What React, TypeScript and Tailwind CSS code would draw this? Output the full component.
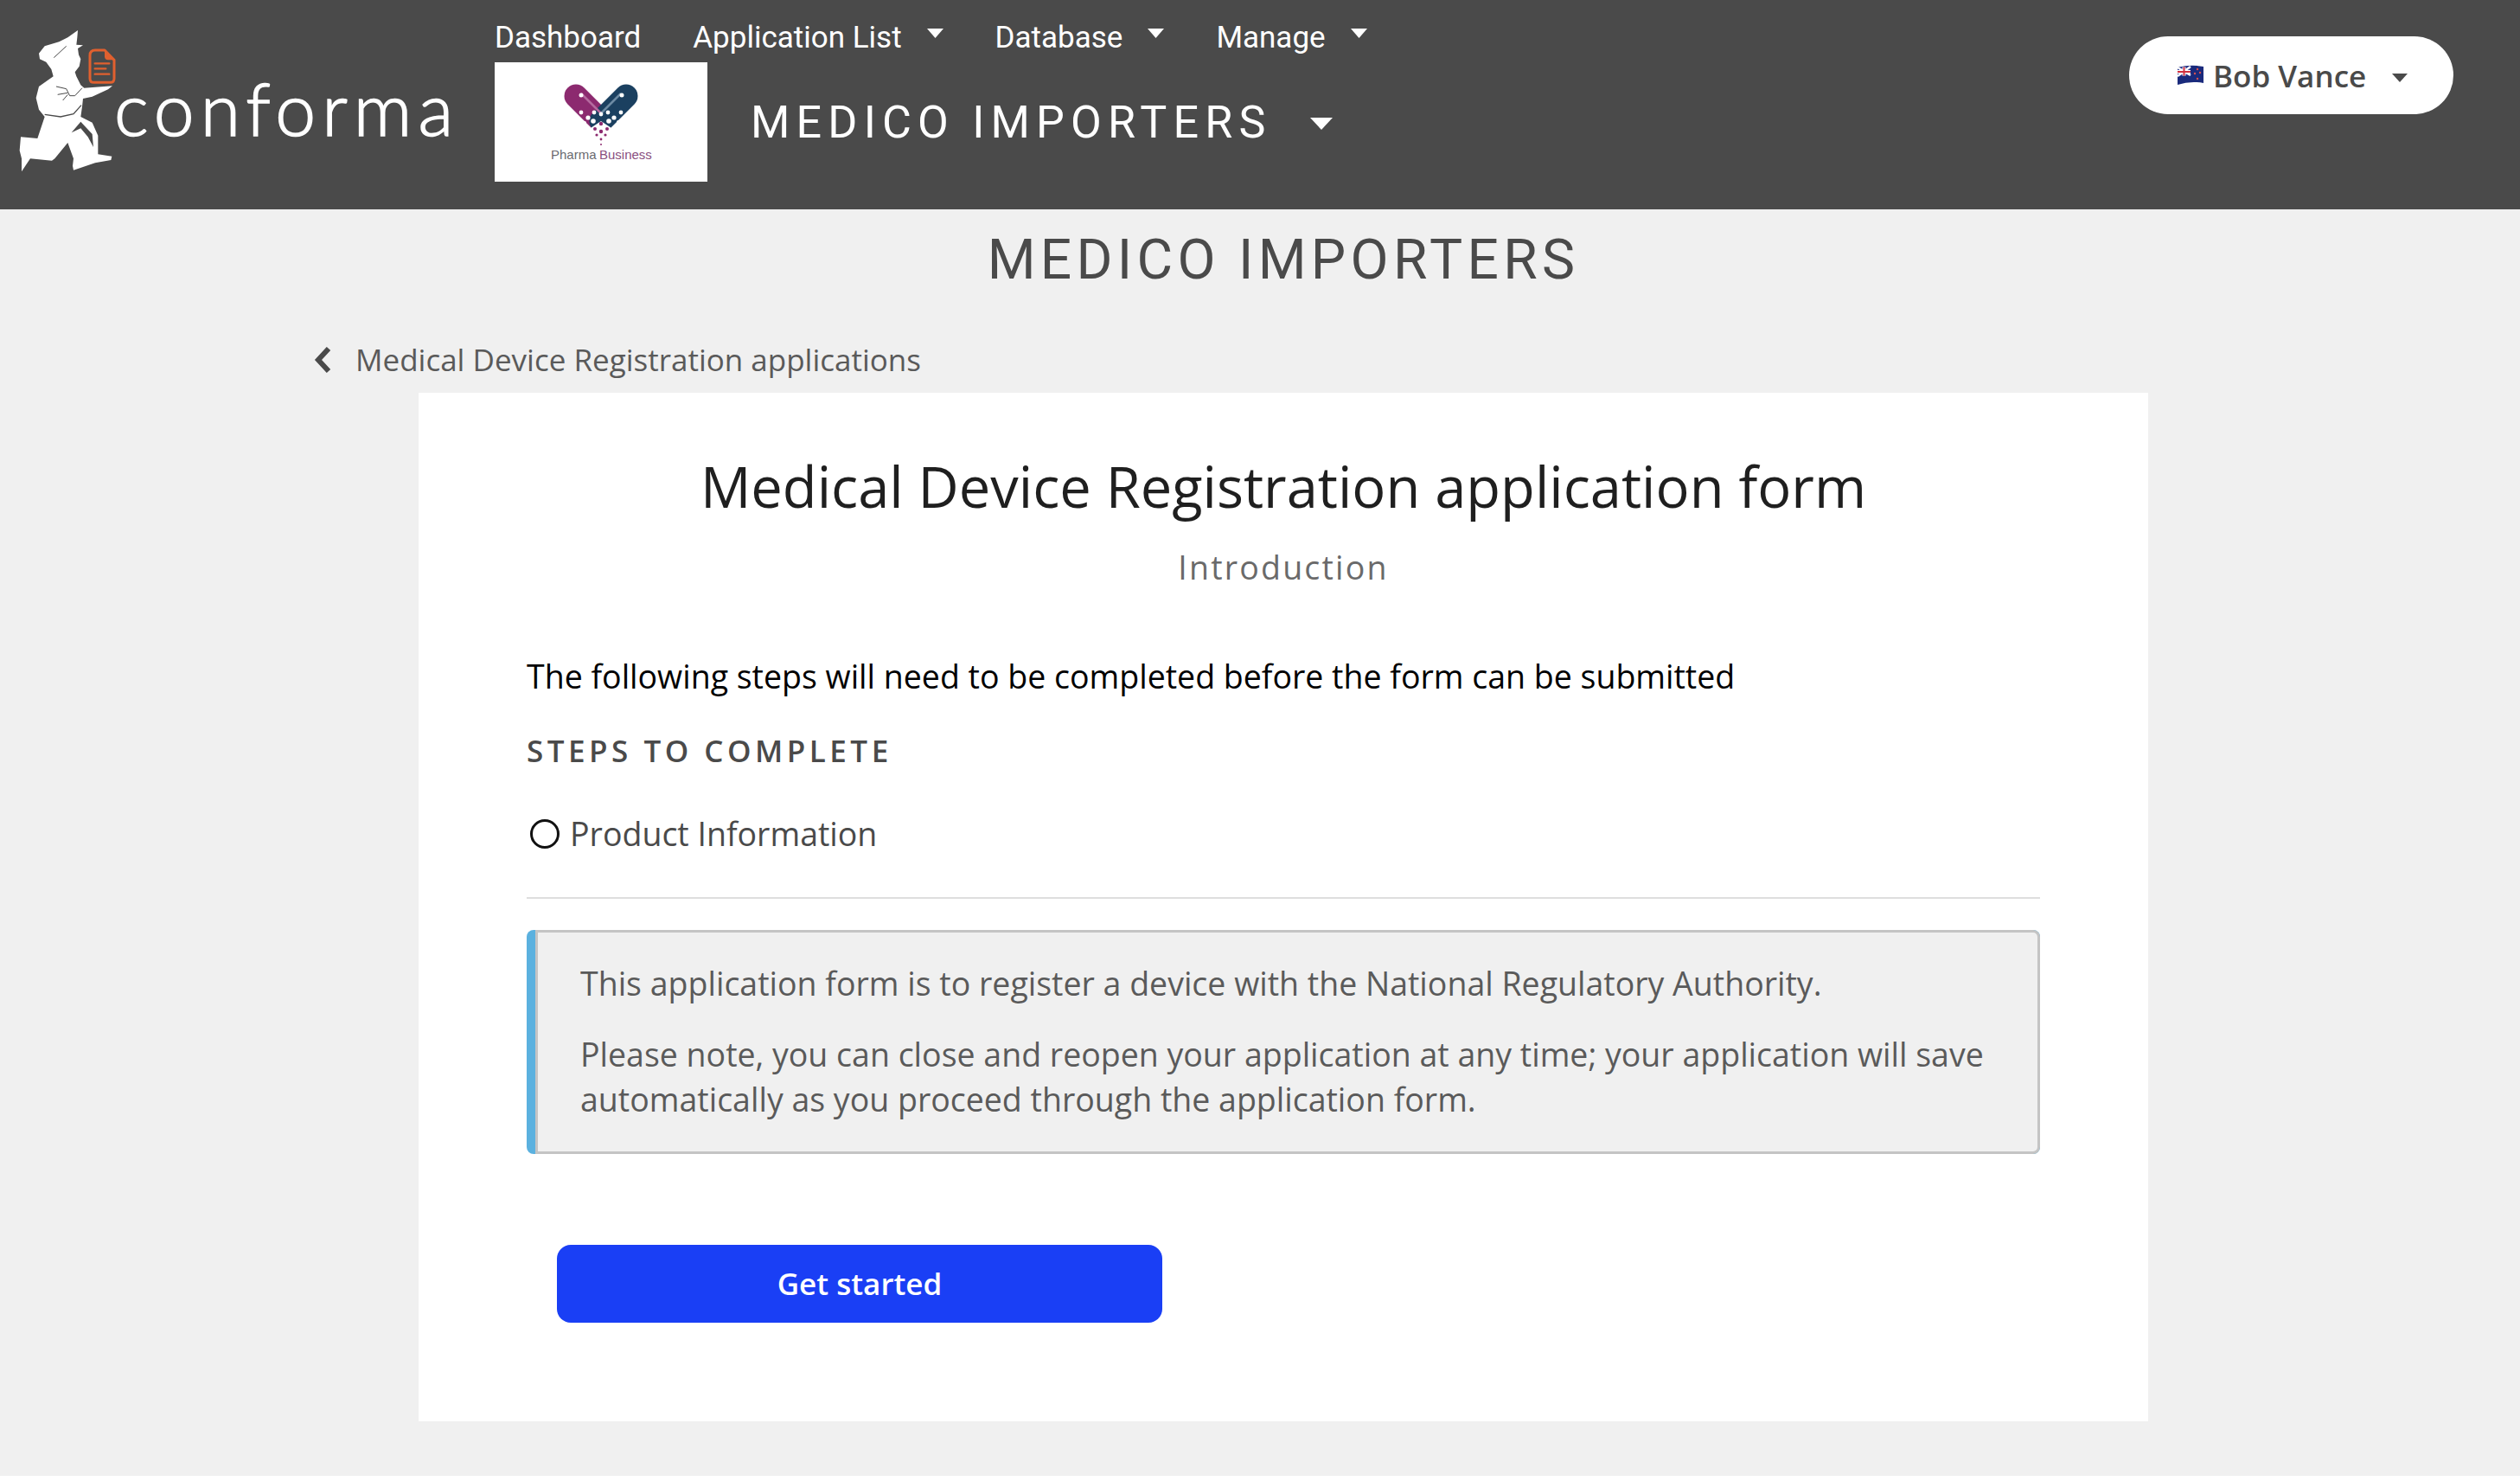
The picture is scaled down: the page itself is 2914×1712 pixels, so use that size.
import React from 'react';

// Running courier with the document, traced from the Conforma logo
function ConformaMan() {
  return (
    <svg width="130" height="190" viewBox="0 0 390 570" className="shrink-0">
      <path
        fill="#ffffff"
        d="M240 45 L238 70 L235 95 L258 97 L240 108 L243 130 L250 145 L245 170 L230 190 L235 205 L250 235 L262 245 L360 238 L345 250 L290 275 L258 282 L255 310 L250 345 L290 365 L310 410 L310 475 L358 482 L355 495 L300 505 L225 530 L222 515 L225 490 L205 435 L160 490 L150 497 L75 490 L55 520 L45 535 L45 490 L38 462 L42 415 L100 420 L125 345 L105 320 L95 280 L105 240 L140 215 L155 205 L148 180 L130 155 L108 145 L105 125 L125 100 L175 85 L205 70 Z"
      />
      <path fill="none" stroke="#4a4a4a" strokeWidth="3" d="M157 140 L200 100" />
      <path fill="none" stroke="#4a4a4a" strokeWidth="3" d="M165 240 L200 248 L212 272 L230 272 L255 245 M170 268 L205 262 M188 288 L205 268" />
      <path fill="none" stroke="#4a4a4a" strokeWidth="4" d="M125 337 L180 345 L225 335 L252 305" />
      <path fill="#4a4a4a" d="M218 400 L250 362 L290 405 L294 450 L275 415 L250 385 Z" />
      <path fill="none" stroke="#e0602f" strokeWidth="9" strokeLinejoin="round" d="M300 114 H333 L366 148 V212 Q366 226 352 226 H296 Q282 226 282 212 V132 Q282 114 300 114 Z" />
      <path fill="#e0602f" d="M333 114 L366 148 H345 Q333 148 333 136 Z" />
      <path stroke="#e0602f" strokeWidth="7" strokeLinecap="round" d="M299 160 H349 M299 178 H337 M299 197 H349" />
    </svg>
  );
}

// Client logo inside the white box
function PharmaLogo() {
  const whiteDots = [[100, 58, 2.4], [108, 64, 2.6], [115, 58, 2.4], [104, 70, 2], [131, 58, 2.4], [138, 64, 2.6], [146, 58, 2.4], [143, 69, 2], [123, 60, 2.4], [114, 68, 2.8], [132, 68, 2.8]];
  const purpleDots = [[123, 71, 2.2], [116, 77, 2], [130, 77, 2], [123, 80, 2.2], [118, 84, 1.6], [128, 84, 1.6], [123, 89, 1.4], [123, 95, 1]];
  return (
    <svg width="246" height="138" viewBox="0 0 246 138" className="block">
      <line x1="94" y1="39" x2="123" y2="68" stroke="#8c2a6f" strokeWidth="27" strokeLinecap="round" />
      <line x1="152" y1="39" x2="123" y2="68" stroke="#1b4060" strokeWidth="27" strokeLinecap="round" />
      <line x1="100" y1="36" x2="124" y2="60" stroke="#b56a9f" strokeWidth="2.5" />
      <line x1="146" y1="36" x2="122" y2="60" stroke="#6d8ba3" strokeWidth="2.5" />
      <circle cx="100" cy="38" r="2.5" fill="#ffffff" />
      <circle cx="147" cy="38" r="2.5" fill="#ffffff" />
      {whiteDots.map(([cx, cy, r], i) => (
        <circle key={i} cx={cx} cy={cy} r={r} fill="#ffffff" />
      ))}
      <path d="M108 78 L123 68 L138 78 L123 100 Z" fill="#ffffff" />
      {purpleDots.map(([cx, cy, r], i) => (
        <circle key={i} cx={cx} cy={cy} r={r} fill="#8c2a6f" />
      ))}
      <text x="65" y="112" fontFamily="Liberation Sans" fontSize="15" fill="#6a6a6f">Pharma</text>
      <text x="121" y="112" fontFamily="Liberation Sans" fontSize="15" fill="#8a5080">Business</text>
    </svg>
  );
}

function NzFlag() {
  return (
    <svg width="32" height="24" viewBox="0 0 32 24" className="shrink-0">
      <path d="M1 3 Q16 -1 31 2 V21 Q16 18 1 23 Z" fill="#1a2a7c" />
      <path d="M1 3 L16 2 V12 L1 13 Z" fill="#2a3a90" />
      <path d="M1 3 L16 12 M16 2 L1 13" stroke="#ffffff" strokeWidth="2.5" />
      <path d="M8.5 2.5 V12.5 M1 8 H16" stroke="#ffffff" strokeWidth="4" />
      <path d="M8.5 2.5 V12.5 M1 8 H16" stroke="#d03040" strokeWidth="2" />
      <circle cx="24" cy="5" r="1.2" fill="#d85050" />
      <circle cx="21" cy="10" r="1.2" fill="#d85050" />
      <circle cx="27" cy="9" r="1.2" fill="#d85050" />
      <circle cx="24" cy="16" r="1.2" fill="#d85050" />
    </svg>
  );
}

function Caret({ className }: { className: string }) {
  return (
    <svg viewBox="0 0 18 10" className={className} fill="currentColor" preserveAspectRatio="none">
      <path d="M0 0 H18 L9 10 Z" />
    </svg>
  );
}

function NavItem({ label, menu }: { label: string; menu?: boolean }) {
  return (
    <div className="flex items-center">
      <span>{label}</span>
      {menu && <Caret className="ml-[29px] w-[19px] h-[11px] -mt-[12px]" />}
    </div>
  );
}

export default function App() {
  return (
    <div className="h-[1706px] bg-[#f0f0f0] font-['Open_Sans',sans-serif]">
      {/* top bar */}
      <header className="h-[242px] bg-[#4a4a4a] flex text-white font-['Roboto',sans-serif]">
        <div className="w-[572px] shrink-0 pl-[10px] pt-[20px] flex items-start">
          <ConformaMan />
          <span className="-ml-[8px] mt-[55px] text-[84px] leading-[100px] tracking-[7px] font-light font-['Lato',sans-serif] [-webkit-text-stroke:1.5px_white]">
            conforma
          </span>
        </div>

        <div className="flex flex-col">
          <nav className="h-[72px] flex items-center gap-[60px] text-[35px] pt-[16px]">
            <NavItem label="Dashboard" />
            <NavItem label="Application List" menu />
            <NavItem label="Database" menu />
            <NavItem label="Manage" menu />
          </nav>
          <div className="flex items-center">
            <div className="w-[246px] h-[138px] bg-white">
              <PharmaLogo />
            </div>
            <div className="ml-[50px] flex items-center text-[52px] tracking-[7.2px] mt-[1px]">
              <span>MEDICO IMPORTERS</span>
              <Caret className="ml-[44px] w-[26px] h-[14px] mt-[2px]" />
            </div>
          </div>
        </div>

        <div className="ml-auto mr-[77px] mt-[42px] w-[375px] h-[90px] rounded-full bg-white text-[#4a4a4a] flex items-center pl-[55px] font-['Open_Sans',sans-serif]">
          <NzFlag />
          <span className="ml-[10px] mt-[2px] text-[35px] font-semibold">Bob Vance</span>
          <Caret className="ml-[30px] w-[18px] h-[10px] mt-[6px]" />
        </div>
      </header>

      <main className="ml-[354px] w-[2260px]">
        <h1 className="pt-[27px] text-center text-[64px] leading-[64px] tracking-[5.3px] text-[#4a4a4a] font-['Roboto',sans-serif]">
          MEDICO IMPORTERS
        </h1>

        <div className="mt-[61px] h-[44px] flex items-center text-[35px] text-[#5a5a5a]">
          <svg width="20" height="30" viewBox="0 0 20 30" className="ml-[9px]">
            <path d="M17 2 L5 15 L17 28" fill="none" stroke="#4a4a4a" strokeWidth="6" />
          </svg>
          <span className="ml-[28px]">Medical Device Registration applications</span>
        </div>

        <section className="mt-[16px] ml-[130px] w-[2000px] h-[1189px] bg-white px-[125px] pt-[68px]">
          <h2 className="text-center text-[65px] leading-[80px] text-[#1f1f1f]">
            Medical Device Registration application form
          </h2>
          <p className="mt-[26px] text-center text-[37.5px] leading-[56px] text-[#6a6a6a] tracking-[2.2px]">Introduction</p>

          <p className="mt-[70px] text-[37.5px] leading-[56px] text-black">
            The following steps will need to be completed before the form can be submitted
          </p>
          <h3 className="mt-[38px] text-[35px] leading-[40px] font-semibold tracking-[4.5px] text-[#4a4a4a]">STEPS TO COMPLETE</h3>

          <div className="mt-[52px] h-[48px] flex items-center text-[37.5px] text-[#4a4a4a]">
            <span className="ml-[4px] w-[34px] h-[34px] rounded-full border-[3px] border-[#111111]" />
            <span className="ml-[12px]">Product Information</span>
          </div>

          <div className="mt-[49px] h-[2px] bg-[#dedede]" />

          <div className="mt-[36px] h-[259px] rounded-[8px] bg-[#5bb1df] pl-[10px]">
            <div className="h-full rounded-r-[8px] bg-[#f0f0f0] border-[3px] border-[#c4c4c4] pl-[49px] pt-[33px] text-[37.5px] leading-[52px] text-[#5a5a5a]">
              <p>This application form is to register a device with the National Regulatory Authority.</p>
              <p className="mt-[30px]">
                Please note, you can close and reopen your application at any time; your application will save
                <br />
                automatically as you proceed through the application form.
              </p>
            </div>
          </div>

          <button className="mt-[105px] ml-[35px] w-[700px] h-[90px] rounded-[16px] bg-[#1a3ff5] text-white text-[35px] font-semibold">
            Get started
          </button>
        </section>
      </main>
    </div>
  );
}
